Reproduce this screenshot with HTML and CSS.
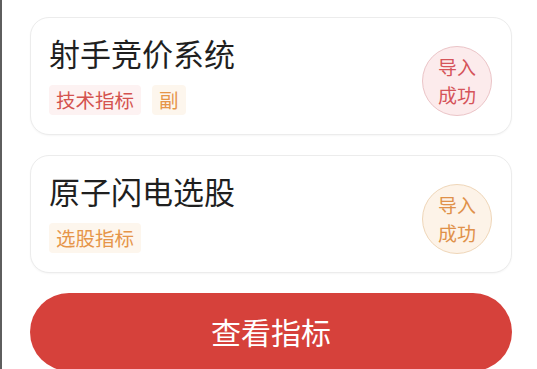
FILE: index.html
```html
<!DOCTYPE html>
<html lang="zh">
<head>
<meta charset="utf-8">
<link rel="stylesheet" href="styles.css">
</head>
<body>
<div class="page">
  <div class="card">
    <div class="info">
      <div class="title">射手竞价系统</div>
      <div class="tags">
        <span class="tag tag-red">技术指标</span>
        <span class="tag tag-orange">副</span>
      </div>
    </div>
    <div class="badge badge-red">导入<br>成功</div>
  </div>
  <div class="card">
    <div class="info">
      <div class="title">原子闪电选股</div>
      <div class="tags">
        <span class="tag tag-orange">选股指标</span>
      </div>
    </div>
    <div class="badge badge-orange">导入<br>成功</div>
  </div>
  <button class="btn">查看指标</button>
</div>
</body>
</html>
```
FILE: styles.css
```css
html, body {
  margin: 0;
  padding: 0;
  background: #ffffff;
  overflow: hidden;
}
body {
  width: 537px;
  height: 369px;
  font-family: "Noto Sans CJK SC", "Noto Sans", sans-serif;
}
.page {
  box-sizing: border-box;
  height: 369px;
  border-left: 2px solid #5e5e5e;
  padding: 17px 25px 0 28px;
  display: flex;
  flex-direction: column;
  gap: 20px;
}
.card {
  box-sizing: border-box;
  height: 118px;
  border: 1px solid #ececec;
  border-radius: 19px;
  background: #fff;
  box-shadow: 0 1px 2px rgba(0,0,0,0.04);
  display: flex;
  align-items: center;
  justify-content: space-between;
  padding: 0 19px 0 18px;
  flex-shrink: 0;
}
.info {
  display: flex;
  flex-direction: column;
  gap: 16px;
}
.title {
  font-size: 31px;
  line-height: 32px;
  color: #1f1f1f;
}
.tags {
  display: flex;
  gap: 11px;
}
.tag {
  font-size: 19.5px;
  line-height: 30px;
  height: 30px;
  padding: 0 7px;
  border-radius: 4px;
}
.tag-red {
  color: #d4524f;
  background: #fdf2f2;
}
.tag-orange {
  color: #e69549;
  background: #fdf6ed;
}
.badge {
  box-sizing: border-box;
  width: 70px;
  height: 70px;
  border-radius: 50%;
  font-size: 19px;
  line-height: 28px;
  text-align: center;
  display: flex;
  align-items: center;
  justify-content: center;
  margin-top: 10px;
}
.badge-red {
  background: #fcebec;
  border: 1px solid #ebc4c7;
  color: #d5545a;
}
.badge-orange {
  background: #fdf3e8;
  border: 1px solid #efd6b8;
  color: #e0914a;
}
.btn {
  flex-shrink: 0;
  width: 482px;
  height: 78px;
  border: none;
  border-radius: 39px;
  background: #d6413b;
  color: #ffffff;
  font-family: "Noto Sans CJK SC", "Noto Sans", sans-serif;
  font-size: 30px;
  padding: 0 0 3px 0;
}
```
